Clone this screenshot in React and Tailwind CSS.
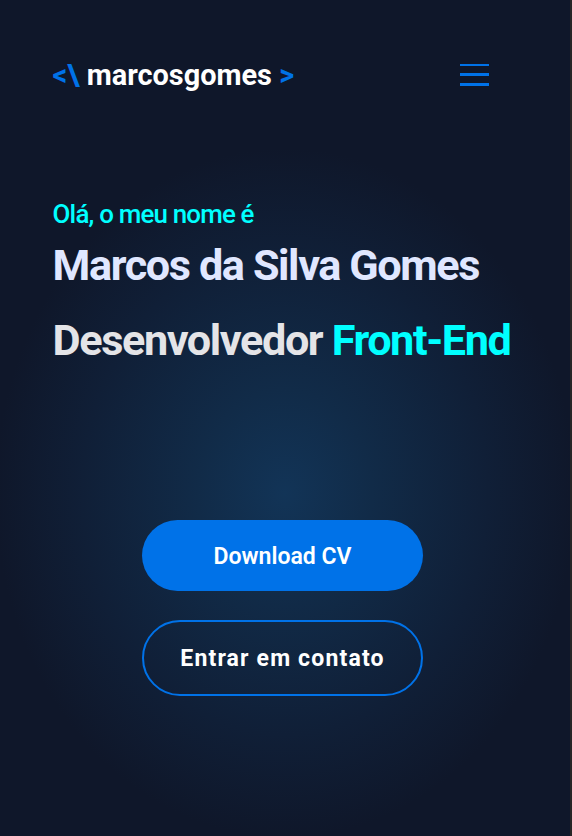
export default function App() {
  return (
    <div className="flex h-[836px] w-[572px] overflow-hidden bg-[#262626] font-['Roboto',sans-serif]">
      <div className="flex w-[570px] flex-col bg-[#0f172a]">
        <header className="flex h-[150px] items-center justify-between pr-[81px] pl-[52.6px]">
          <h1 className="text-[28.9px] leading-none font-bold whitespace-pre text-white">
            <span className="text-[#0072e8]">&lt;\</span> marcosgomes <span className="text-[#0072e8]">&gt;</span>
          </h1>
          <button aria-label="Menu" className="flex w-[29px] flex-col">
            <span className="h-[2px] bg-[#0072e8]" />
            <span className="mt-[7px] h-[3px] bg-[#0072e8]" />
            <span className="mt-[7px] h-[3px] bg-[#0072e8]" />
          </button>
        </header>
        <main className="flex flex-1 flex-col bg-[radial-gradient(ellipse_290px_345px_at_center,#123457_0%,#112b48_30%,#101f37_70%,#0f172a_100%)]">
          <section className="flex flex-col pt-[46px] pl-[52.6px]">
            <p className="h-[36px] text-[25.92px] leading-[36px] font-medium tracking-[-0.82px] text-[#00ffff]">Olá, o meu nome é</p>
            <h2 className="mt-[-4px] h-[75px] text-[43.2px] leading-[75px] font-bold tracking-[-1.4px] text-[#e0e7ff]">Marcos da Silva Gomes</h2>
            <h2 className="h-[75px] text-[43.2px] leading-[75px] font-bold tracking-[-1.4px] whitespace-nowrap text-[#e4e4e7]">
              Desenvolvedor <span className="text-[#00ffff]">Front-End</span>
            </h2>
          </section>
          <div className="mt-[142px] ml-[142px] flex w-[281px] flex-col gap-[29px]">
            <button className="h-[71px] rounded-full bg-[#0072e8] pt-[3px] text-[23.04px] font-semibold text-white">Download CV</button>
            <button className="h-[76px] rounded-full border-2 border-[#0072e8] pt-[2px] text-[23.04px] font-bold tracking-[1.15px] text-white">Entrar em contato</button>
          </div>
        </main>
      </div>
    </div>
  );
}
